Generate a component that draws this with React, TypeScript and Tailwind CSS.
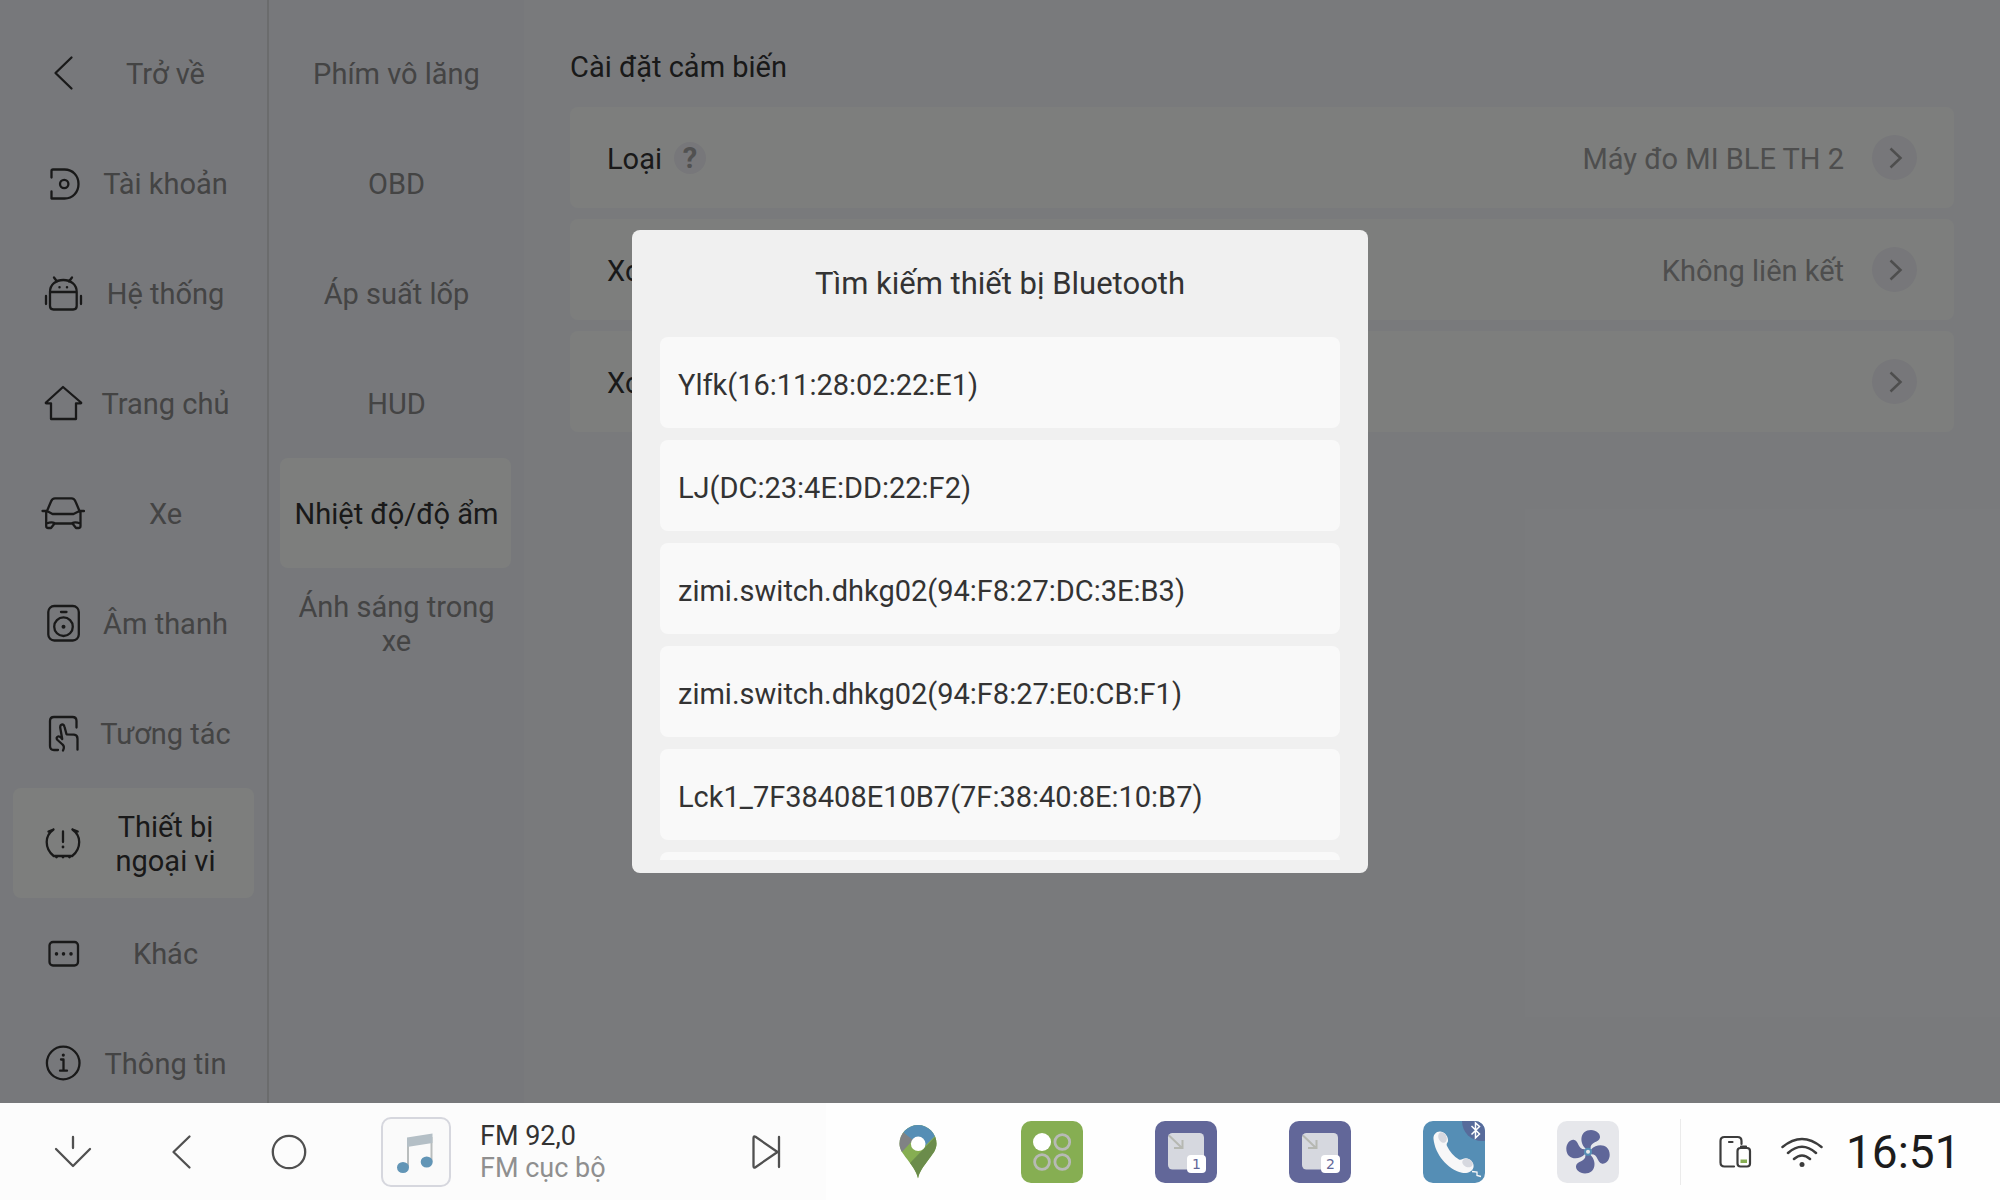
import type { ReactNode } from "react";

function LineIcon({ children }: { children: ReactNode }) {
    return (
        <svg
            viewBox="0 0 44 44"
            className="w-11 h-11 shrink-0"
            fill="none"
            stroke="currentColor"
            strokeWidth="2.300"
            strokeLinecap="round"
            strokeLinejoin="round"
            aria-hidden="true"
        >
            {children}
        </svg>
    );
}

const menu = [
    {
        name: "Trở về",
        icon: <path d="M30.5 6.5 14.5 22l16 15.500" />,
    },
    {
        name: "Tài khoản",
        icon: (
            <>
                <path d="M10.500 16.500V10q0-1.500 1.500-1.500h11.500c8.500 0 14 6.500 14 14.500s-5.500 14.500-14 14.500h-13V30.500" />
                <circle cx="23.200" cy="23" r="4.200" />
            </>
        ),
    },
    {
        name: "Hệ thống",
        icon: (
            <>
                <path d="M9 21C9 13.500 15 9 22.300 9s13.400 4.500 13.400 12v14q0 3.500-3.500 3.500H12.500Q9 38.500 9 35zh26.500M13 6.500l3 4M31 6.500l-3 4M5 25v8M40 25v8" />
                <path d="M18.500 16.200v.1M26 16.200v.1" strokeWidth="2.500" />
            </>
        ),
    },
    {
        name: "Trang chủ",
        icon: <path d="M22 6 5 21.500q-.6.800.5.800H10V38h25V22.300h4.500q1.100 0 .5-.8z" />,
    },
    {
        name: "Xe",
        icon: (
            <path d="M1.500 20H6M38.500 20H43M6 20l4-9.500q1.200-3.200 4-3.200h16.500q2.800 0 4 3.200l4 9.500M6 20l5.500 3h21l6-3M5.200 20.500V35q0 2 2 2H10l3.500-4.500h18L35 37h2.500q2 0 2-2V20.500M5.500 32.500q5-2 8-.5M39.300 32.500q-5-2-8-.5" />
        ),
    },
    {
        name: "Âm thanh",
        icon: (
            <>
                <rect x="7.300" y="5" width="30.500" height="34.500" rx="6" />
                <circle cx="22.500" cy="25.700" r="9.300" />
                <path d="M20 11h5.500" />
                <circle cx="22.500" cy="25.700" r="2" fill="currentColor" stroke="none" />
            </>
        ),
    },
    {
        name: "Tương tác",
        icon: (
            <path d="M35.500 16.500V10q0-4-4-4H13Q9 6 9 10v25q0 4 4 4h4M22 39.500q2-4-.5-6L16.500 29q-2-2.500.500-3.500 2-.5 4.200 2.500l-2-11.500q0-3 2-3.200 1.700 0 2.300 2.500l2 7.500 7.500.4q3.500.3 3.500 4v11" />
        ),
    },
    {
        name: "Thiết bị ngoại vi",
        icon: (
            <>
                <path d="M12.500 8.500C7.500 12 5.700 16 5.700 21c0 5.500 2.500 10.500 7 14h18.500c4.500-3.500 7-8.500 7-14 0-5-1.800-9-6.800-12.500M7.500 10.500l5-2M36.700 10.500l-5-2M22 10.500V21" />
                <path d="M22 26v.1M15.500 36v.1M22 36v.1M28.500 36v.1" strokeWidth="2.800" />
            </>
        ),
    },
    {
        name: "Khác",
        icon: (
            <>
                <rect x="8.500" y="11" width="28.500" height="23.500" rx="3.500" />
                <path d="M15.500 22.800v.1M22.500 22.800v.1M30 22.800v.1" strokeWidth="3.500" />
            </>
        ),
    },
    {
        name: "Thông tin",
        icon: (
            <>
                <circle cx="22.200" cy="22" r="16.300" />
                <path d="M20 18.500h2.500v11M19 29.700h7" />
                <path d="M22.300 14v.1" strokeWidth="3.200" />
            </>
        ),
    },
];

const subMenu = ["Phím vô lăng", "OBD", "Áp suất lốp", "HUD", "Nhiệt độ/độ ẩm", "Ánh sáng trong xe"];

const rows = [
    { label: "Loại", value: "Máy đo MI BLE TH 2", help: true },
    { label: "Xoá", value: "Không liên kết", help: false },
    { label: "Xoá", value: "", help: false },
];

const devices = [
    "Ylfk(16:11:28:02:22:E1)",
    "LJ(DC:23:4E:DD:22:F2)",
    "zimi.switch.dhkg02(94:F8:27:DC:3E:B3)",
    "zimi.switch.dhkg02(94:F8:27:E0:CB:F1)",
    "Lck1_7F38408E10B7(7F:38:40:8E:10:B7)",
    "",
];

function Sidebar() {
    return (
        <nav className="w-[269px] shrink-0 overflow-hidden bg-[#eef0f7] border-r-2 border-[#d6d8da] pt-[18px] px-[13px]">
            {menu.map((item, i) => (
                <button
                    key={i}
                    className={
                        item.name === "Thiết bị ngoại vi"
                            ? "flex items-center w-full h-[110px] pl-7 pr-2 rounded-lg bg-[#fafdfa] text-[#333333]"
                            : "flex items-center w-full h-[110px] pl-7 pr-2 rounded-lg text-[#888888]"
                    }
                >
                    <span className="text-[#333333]">
                        <LineIcon>{item.icon}</LineIcon>
                    </span>
                    <span className="flex-1 px-2 pt-0.5">{item.name}</span>
                </button>
            ))}
        </nav>
    );
}

function SubMenu() {
    return (
        <nav className="w-[255px] shrink-0 overflow-hidden bg-[#eef0f7] pt-[18px] pl-[11px] pr-[13px]">
            {subMenu.map((name, i) => (
                <button
                    key={i}
                    className={
                        name === "Nhiệt độ/độ ẩm"
                            ? "block w-full h-[110px] pt-0.5 pl-3.5 pr-3 rounded-lg bg-[#fafdfa] text-[#333333]"
                            : "block w-full h-[110px] pt-0.5 pl-3.5 pr-3 rounded-lg text-[#888888]"
                    }
                >
                    {name}
                </button>
            ))}
        </nav>
    );
}

function Settings() {
    return (
        <main className="flex-1 overflow-hidden bg-[#f3f5f9] pt-[50px] px-[46px]">
            <h1 className="mb-[23px] text-[#333333]">Cài đặt cảm biến</h1>
            <div className="flex flex-col gap-[11px]">
                {rows.map((row, i) => (
                    <button key={i} className="flex items-center w-full h-[101px] px-[37px] rounded-lg bg-[#fafdfa] text-[#333333]">
                        <span className="pt-0.5">{row.label}</span>
                        {row.help && (
                            <span className="ml-3 w-8 h-8 rounded-full bg-[#eeeef4] text-[#a2a2a2] font-bold flex items-center justify-center">?</span>
                        )}
                        <span className="ml-auto mr-7 pt-0.5 text-[#9c9c9c]">{row.value}</span>
                        <span className="w-[45px] h-[45px] rounded-full bg-[#eeeef4] flex items-center justify-center">
                            <svg viewBox="0 0 24 24" className="w-6 h-6" fill="none" stroke="#9c9c9c" strokeWidth="2.500" aria-hidden="true">
                                <path d="m7.500 2.500 10 9.500-10 9.500" />
                            </svg>
                        </span>
                    </button>
                ))}
            </div>
        </main>
    );
}

function BluetoothDialog() {
    return (
        <div className="absolute inset-0 bg-black/50 flex items-center justify-center">
            <div role="dialog" aria-labelledby="bt-title" className="w-[736px] px-7 pb-[13px] rounded-lg bg-[#f0f0f0] text-[#333333]">
                <h2 id="bt-title" className="h-[107px] flex items-center justify-center text-[31px]">
                    Tìm kiếm thiết bị Bluetooth
                </h2>
                <div className="h-[523px] overflow-hidden flex flex-col gap-3">
                    {devices.map((device, i) => (
                        <button key={i} className="w-full h-[91px] shrink-0 px-[18px] pt-1 rounded-lg bg-[#f9f9f9] text-left">
                            {device}
                        </button>
                    ))}
                </div>
            </div>
        </div>
    );
}

function WindowTile({ n }: { n: number }) {
    return (
        <span className="relative block w-[62px] h-[62px] rounded-[10px] bg-[#626799]">
            <svg viewBox="0 0 62 62" className="w-full h-full" fill="none" aria-hidden="true">
                <rect x="13" y="12" width="36" height="36.500" rx="4.500" fill="#d6d8df" />
                <path d="M14 14.500 27 27M19 27h8.500v-8" stroke="#b6b8b2" strokeWidth="2" />
            </svg>
            <span className="absolute right-[11px] bottom-[10px] w-[19px] h-[18px] rounded bg-white text-[#626799] text-[14px] leading-[18px] text-center [font-family:'DejaVu_Sans',sans-serif]">
                {n}
            </span>
        </span>
    );
}

const apps = [
    {
        name: "Bản đồ",
        icon: (
            <svg viewBox="0 0 38 54" className="w-[38px] h-[54px]" aria-hidden="true">
                <clipPath id="pin">
                    <path d="M19 53.500C17.500 46 13 41 8 34 3 27.500.5 24 .5 18.500a18.500 18.500 0 0 1 37 0c0 5.500-2.500 9-7.500 15.500-5 7-9.500 12-11 19.500z" />
                </clipPath>
                <g clipPath="url(#pin)">
                    <path d="M0 0h38v54H0z" fill="#86ae52" />
                    <path d="M38 10 11 38l8 16h19z" fill="#6b8c4b" />
                    <path d="M0 0h38v9L26 21 12 15 4 7z" fill="#558eb5" />
                    <path d="M0 4 5 8l9 7-12 13-2-4z" fill="#808284" />
                </g>
                <circle cx="19.200" cy="18.800" r="7.300" fill="#fff" />
            </svg>
        ),
    },
    {
        name: "Ứng dụng",
        icon: (
            <svg viewBox="0 0 62 62" className="w-[62px] h-[62px] rounded-[10px] bg-[#86ae52]" fill="none" stroke="#b7bab5" strokeWidth="2.800" aria-hidden="true">
                <circle cx="21" cy="21" r="9" fill="#fff" stroke="none" />
                <circle cx="41.300" cy="21" r="7.400" />
                <circle cx="21" cy="41" r="7.400" />
                <circle cx="41.300" cy="41" r="7.400" />
            </svg>
        ),
    },
    { name: "Cửa sổ 1", icon: <WindowTile n={1} /> },
    { name: "Cửa sổ 2", icon: <WindowTile n={2} /> },
    {
        name: "Điện thoại",
        icon: (
            <svg viewBox="0 0 62 62" className="w-[62px] h-[62px] rounded-[10px] bg-[#558eb5]" fill="none" aria-hidden="true">
                <circle cx="59" cy="0" r="20" fill="#576b9b" />
                <path d="m48.500 5 8 8-4 4V2l4 3.500-8 8" stroke="#fff" strokeWidth="1.500" />
                <path d="M10.500 18c-.5-4.500 3-8 7-7.500 5 .5 8 6 7.500 9.500-.3 2-2 2.500-1 5 2.500 5.500 7 10.500 12 13.500 2.500 1 4-1.500 7-1.300 4.500.3 8.500 4.800 7.500 9-1 4.500-6.500 6.500-11.500 5.500C24.500 48.500 12 33 10.500 18z" fill="#f7f7f8" />
                <ellipse cx="19.500" cy="16.500" rx="4" ry="5.500" transform="rotate(-25 19.500 16.500)" fill="#d6d8df" />
                <ellipse cx="44.500" cy="42" rx="5.500" ry="4" transform="rotate(25 44.500 42)" fill="#d6d8df" />
                <path d="m49 50.500 5 .5v3.500l4 1" stroke="#f7f7f8" strokeWidth="1.300" />
            </svg>
        ),
    },
    {
        name: "Điều hoà",
        icon: (
            <svg viewBox="0 0 62 62" className="w-[62px] h-[62px] rounded-[10px] bg-[#e6e7eb]" aria-hidden="true">
                {["rotate(0 31 30.700)", "rotate(90 31 30.700)", "rotate(180 31 30.700)", "rotate(270 31 30.700)"].map((turn, i) => (
                    <path
                        key={i}
                        transform={turn}
                        d="M28.500 27.500C22 21.500 23 9 34 9c5.500 0 9.500 4 9 7.500-1 5.500-9.500 3.500-9.500 11z"
                        fill="#5f6699"
                    />
                ))}
                <circle cx="31" cy="30.700" r="4" fill="#558eb5" />
                <circle cx="31" cy="30.700" r="2" fill="#e6e7eb" />
            </svg>
        ),
    },
];

function Dock() {
    return (
        <footer className="flex h-[97px] shrink-0 bg-[#fefefe] text-[#505050]">
            {/* Điều hướng và trình phát */}
            <div className="w-[826px] shrink-0 flex items-center bg-[#fcfcfc] pl-[19px] pr-[45px]">
                <button aria-label="Ẩn" className="w-[108px] flex justify-center">
                    <LineIcon><path d="M22 7v11M5 19l17 17 17-17" /></LineIcon>
                </button>
                <button aria-label="Quay lại" className="w-[108px] flex justify-center">
                    <LineIcon><path d="M30.500 6.500 14.500 22l16 15.500" /></LineIcon>
                </button>
                <button aria-label="Màn hình chính" className="w-[108px] flex justify-center">
                    <LineIcon><circle cx="22" cy="22" r="16.200" /></LineIcon>
                </button>
                <div className="ml-[38px] w-[70px] h-[70px] rounded-[10px] border-2 border-[#d6d7de] bg-[#fafafa]">
                    <svg viewBox="2 2 66 66" className="w-full h-full" aria-hidden="true">
                        <path d="M27 50V25M50.500 45V20" stroke="#b9bdbd" strokeWidth="2" />
                        <path d="m26 20.500 25.500-4V26L26 30z" fill="#b4bfc6" />
                        <ellipse cx="22" cy="50.500" rx="6" ry="5.500" fill="#6295b6" />
                        <ellipse cx="45.700" cy="45" rx="6" ry="5.500" fill="#6295b6" />
                    </svg>
                </div>
                <div className="ml-[29px] text-[27px] leading-8">
                    <p className="text-[#333333]">FM 92,0</p>
                    <p className="text-[#8f8f8f]">FM cục bộ</p>
                </div>
                <button aria-label="Tiếp theo" className="ml-auto">
                    <svg viewBox="0 0 30 44" className="w-[30px] h-11" fill="none" stroke="currentColor" strokeWidth="2.300" strokeLinecap="round" strokeLinejoin="round" aria-hidden="true">
                        <path d="M2.500 8q0-2.500 2-1.200L26.500 22l-22 15.200q-2 1.200-2-1.200zM28 7v30" />
                    </svg>
                </button>
            </div>

            {/* Ứng dụng */}
            <div className="flex-1 flex items-center px-[25px]">
                {apps.map((app, i) => (
                    <button key={i} aria-label={app.name} className="flex-1 flex justify-center">
                        {app.icon}
                    </button>
                ))}
            </div>

            {/* Trạng thái */}
            <div className="w-[320px] shrink-0 flex items-center">
                <div className="w-px h-[66px] bg-[#ebebeb]" />
                <svg viewBox="0 0 34 34" className="ml-[37px] w-[34px] h-[34px]" fill="none" stroke="#3c3c3c" strokeWidth="2.200" strokeLinecap="round" aria-hidden="true">
                    <path d="M23.500 9V6q0-4-4-4h-13Q2.500 2 2.500 6v21.500q0 4 4 4H16M11 7h3.500M23 11.500h5" />
                    <rect x="19.500" y="13" width="12.500" height="18.500" rx="3" />
                    <path d="M22.500 24.500h6.500v3.500h-6.500z" fill="#86ae52" stroke="none" />
                </svg>
                <svg viewBox="0 0 44 34" className="ml-7 w-11 h-[34px]" fill="none" stroke="#3c3c3c" strokeWidth="2.500" strokeLinecap="round" aria-hidden="true">
                    <path d="M2.500 12q19.500-16 39 0M8 18q14-12.500 28 0M14 24q8-7 16 0" />
                    <circle cx="22" cy="29.500" r="2.500" fill="#3c3c3c" stroke="none" />
                </svg>
                <span className="ml-[22px] text-[46px] leading-none text-[#1c1c1c]">16:51</span>
            </div>
        </footer>
    );
}

export default function App() {
    return (
        <div lang="vi" className="h-screen flex flex-col text-[29px] leading-[34px] [font-family:Roboto,'Noto_Sans',sans-serif]">
            <div className="relative flex-1 min-h-0 flex">
                <Sidebar />
                <SubMenu />
                <Settings />
                <BluetoothDialog />
            </div>
            <Dock />
        </div>
    );
}
